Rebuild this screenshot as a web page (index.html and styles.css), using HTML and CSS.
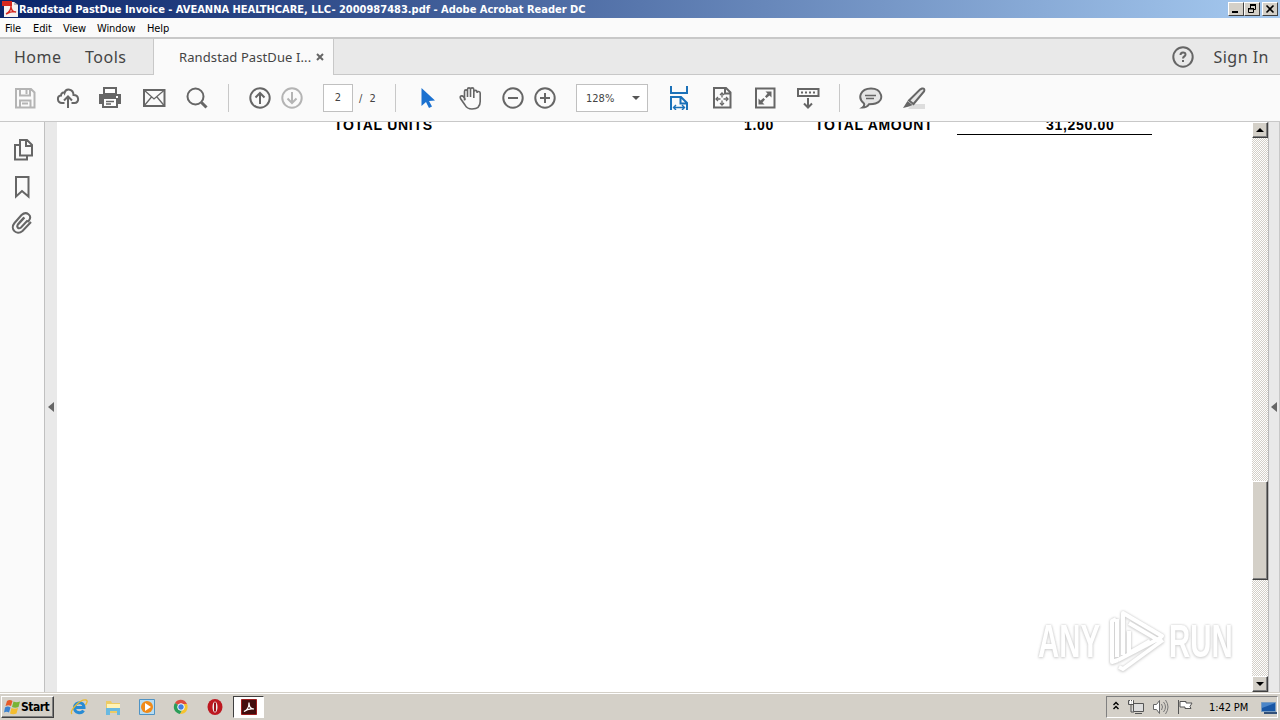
FILE: index.html
```html
<!DOCTYPE html>
<html lang="en">

<head>
  <meta charset="UTF-8">
  <title>Adobe Acrobat Reader DC</title>
  <link rel="stylesheet" href="styles.css">
</head>

<body>
  <div class="titlebar">
    <svg class="app-icon" width="16" height="16" viewBox="0 0 16 16">
      <path fill="#f4f1f0" d="M2 1h10l4 3v12H2z"/>
      <path fill="#bbb" d="M12 1v3h4z"/>
      <path fill="#d5281f" d="M0 0h10v5H0z"/>
      <path fill="none" stroke="#d5281f" stroke-width="1.4" d="M4 13c4-2 5-5 5-8 0 4 2 6 5 6-3-1-6 0-10 2z"/>
    </svg>
    <span class="title">Randstad PastDue Invoice - AVEANNA HEALTHCARE, LLC- 2000987483.pdf - Adobe Acrobat Reader DC</span>
    <div class="win-buttons">
      <button class="win-btn"><svg width="12" height="10"><path fill="#000" d="M2 7h6v2H2z"/></svg></button>
      <button class="win-btn"><svg width="12" height="10"><path fill="none" stroke="#000" d="M4.500 4V1.500h5v4H8M2.500 4.500h5v4h-5z"/><path fill="#000" d="M4 0h6v2H4zM2 4h6v1.500H2z"/></svg></button>
      <button class="win-btn close"><svg width="12" height="10"><path fill="none" stroke="#000" stroke-width="1.600" d="M2.500 1.500l7 7M9.500 1.500l-7 7"/></svg></button>
    </div>
  </div>

  <div class="menubar">
    <span class="m-file">File</span>
    <span class="m-edit">Edit</span>
    <span class="m-view">View</span>
    <span class="m-window">Window</span>
    <span>Help</span>
  </div>

  <div class="tabs">
    <div class="tabs-left">
      <span class="home">Home</span>
      <span class="tools">Tools</span>
    </div>
    <div class="tab">
      <span class="tab-name">Randstad PastDue I...</span>
      <svg width="8" height="8"><path stroke="#666" stroke-width="2" d="M1 1l6 6M7 1L1 7"/></svg>
    </div>
    <div class="tabs-right">
      <svg class="icon" viewBox="0 0 24 24"><circle cx="12" cy="12" r="9.700"/><path d="M9.500 10c0-3.500 5-3.300 5-.5 0 2-2.500 1.800-2.500 4M12 15v2"/></svg>
      <span class="signin">Sign In</span>
    </div>
  </div>

  <div class="toolbar">
    <svg class="icon light" viewBox="0 0 24 24"><path d="M3 3h15l3.500 3.500V21.500H3zM7 3v6.500h10V3M13.500 4v4M7 21v-6.500h10.500V21M9 17.500h6"/></svg>
    <svg class="icon" viewBox="0 0 24 24"><path d="M8.500 17H6c-5 0-5.500-7-1-7.500C5 6.500 8 6 8.500 7c1.500-5.500 9-4 9 2 6 0 6 8 1 8h-3M12 22V10.500M8 14.500l4-4 4 4"/></svg>
    <svg class="icon print" viewBox="0 0 24 24"><path fill="#666" stroke="none" d="M5 1h14v7H5zM1 8h22v10h-3v4H4v-4H1z"/><path fill="#fff" stroke="none" d="M7 3h10v4H7zM6 13h12v7H6zM18 10h2v2h-2z"/><path stroke-width="1.500" d="M8 15.500h8M8 18h5"/></svg>
    <svg class="icon" viewBox="0 0 24 24"><path d="M2 4h20.500v16H2z"/><path stroke-width="1.300" d="M2 4l10 9L22.500 4M2 20l7.500-9M22.500 20L15 11"/></svg>
    <svg class="icon" viewBox="0 0 24 24"><circle cx="10.500" cy="10.500" r="8"/><path stroke-width="3" d="M16.500 16.500l5 5"/></svg>
    <i class="sep"></i>
    <div class="pair">
      <svg class="icon" viewBox="0 0 24 24"><circle cx="12" cy="12" r="9.700"/><path d="M12 18V7M7.500 11.500L12 7l4.500 4.500"/></svg>
      <svg class="icon light" viewBox="0 0 24 24"><circle cx="12" cy="12" r="9.700"/><path d="M12 6v11M7.500 12.500L12 17l4.500-4.500"/></svg>
    </div>
    <div class="pages">
      <span class="page-box">2</span>
      <span class="page-total">/&nbsp; 2</span>
    </div>
    <i class="sep"></i>
    <svg class="icon" viewBox="0 0 24 24"><path fill="#1b71d0" stroke="none" d="M6.500 2v18l4.500-4 3 6 3-1.500-3-5.500 6-.5z"/></svg>
    <svg class="icon hand" viewBox="0 0 24 24"><path stroke-width="1.600" d="M6.500 14.500V5.500c0-2.200 3-2.200 3 0V11M9.500 11V3.500c0-2.200 3-2.200 3 0V11M12.500 11V3.500c0-2.200 3.300-2.200 3.300 0V12M15.800 12V6c0-2.200 3.200-2.200 3.200 0v0M19 7c0-2.200 3.200-1.800 3.200 0v8.500c0 4.500-2.700 7.500-8.200 7.500-3.500 0-5.500-1-7-4l-4.500-6.500c-1-2.500 1.500-3.500 3-1.700l2 3"/></svg>
    <div class="pair">
      <svg class="icon" viewBox="0 0 24 24"><circle cx="12" cy="12" r="9.700"/><path d="M7 12h10"/></svg>
      <svg class="icon" viewBox="0 0 24 24"><circle cx="12" cy="12" r="9.700"/><path d="M7 12h10M12 7v10"/></svg>
    </div>
    <div class="zoom"><span>128%</span><i class="caret"></i></div>
    <svg class="icon blue" viewBox="0 0 24 24"><path d="M4 0v7h16V0M4 24V11h10l6 6v7M13.500 11v6.500H20"/><path stroke-width="1.400" d="M7 21.500h10M9 19l-2.500 2.500L9 24M15 19l2.500 2.500L15 24"/></svg>
    <svg class="icon" viewBox="0 0 24 24"><path d="M4 2h12l4.500 4.500V21.500H4zM15 2v5.500h5"/><path stroke-width="1.300" stroke-dasharray="4.500 3" d="M6 13h12M12 7v12"/><path stroke-width="1.300" d="M8 11l-2 2 2 2M16 11l2 2-2 2M10 9l2-2 2 2M10 17l2 2 2-2"/></svg>
    <svg class="icon" viewBox="0 0 24 24"><path d="M3 2.500h18.500v19H3z"/><path fill="#666" stroke="none" d="M12.500 5.500h6v6l-2-2-3 2.500-1.500-1.500 2.500-3zM11.500 18.500h-6v-6l2 2 3-2.500 1.500 1.500-2.500 3z"/></svg>
    <svg class="icon" viewBox="0 0 24 24"><path d="M2 3h20.500v7H2zM12 12v9.500M8 17.500l4 4 4-4"/><path stroke-dasharray="2 2" d="M5 6.500h14"/></svg>
    <i class="sep"></i>
    <svg class="icon" viewBox="0 0 24 24"><path fill="#e5e5e5" d="M5 17.500C-2 12 1.500 2.500 12 2.500s14.500 11.500 4.500 15c-2 .7-4.500.7-6.500.7-1.500 2.300-4 3.300-6.500 3.300 1.500-1 2-2.500 1.500-4z"/><path stroke-width="1.300" d="M6 9.500h11M7 12.500h8"/></svg>
    <svg class="icon" viewBox="0 0 24 24"><path fill="#ddd" stroke="none" d="M10 18h13v5H6z"/><path fill="#e5e5e5" d="M20 2.500c2-.5 3 1 2 3L11.500 18 7 14.500 18 3.500z"/><path fill="#666" stroke="none" d="M5.500 15l5 4-3.500 1.500L1 22z"/></svg>
  </div>

  <div class="main">
    <div class="sidebar">
      <svg class="icon" viewBox="0 0 24 24"><path d="M9 2h7l5 5v10.500H9zM15 2v6h6M8 7H4v14.500h12V18"/></svg>
      <svg class="icon mark" viewBox="0 0 24 24"><path d="M5 2h12.500v19.500L11 16l-6 5.500z"/></svg>
      <svg class="icon clip" viewBox="0 0 24 24"><path d="M17.500 9.500l-6.500 7c-2.500 2-5-.5-3-3l6.500-7M8 16c-1-1-.5-3 1-4l5-5.500M21 11l-8.500 9c-6 5-13-2-8-8l7-8c5-4.500 11 .5 7.500 5.500l-1.500 1.500"/></svg>
    </div>
    <div class="collapse left"><i class="tri"></i></div>
    <div class="document">
      <div class="totals">
        <span>TOTAL UNITS</span>
        <span class="units">1.00</span>
        <span>TOTAL AMOUNT</span>
        <span class="amount">31,250.00</span>
      </div>
      <div class="watermark">
        <span>ANY</span>
        <svg width="60" height="64" viewBox="0 0 60 64"><path d="M18 46V4l39 23-4 4L24 14M24 22v22l21-12M11 10L7 12v41l6-2M13 51l42-22M14 58l4 2 40-29M12 10v38"/></svg>
        <span class="run">RUN</span>
      </div>
    </div>
    <div class="scrollbar">
      <div class="scroll-btn"><i class="up"></i></div>
      <div class="thumb"></div>
      <div class="scroll-btn"><i class="down"></i></div>
    </div>
    <div class="collapse right"><i class="tri"></i></div>
  </div>

  <div class="taskbar">
    <div class="start">
      <svg width="17" height="16" viewBox="0 0 17 16"><path fill="#e65a28" d="M3 2c2-1.500 4-1 5.500 0L7 7C5.500 6 3.500 6 1.500 7z"/><path fill="#78b436" d="M9.500 2.500c2 1 4 1 6.500 0L14.500 8c-2 1-4.500 1-6.500 0z"/><path fill="#3b82d0" d="M1 8.500c2-1.500 4-1 5.500 0L5 13.500c-1.500-1-3.500-1-5 0z"/><path fill="#f4bd2f" d="M7.500 9c2 1 4 1 6.500 0l-1.500 5.500c-2 1-4.500 1-6.500 0z"/></svg>
      <span>Start</span>
    </div>
    <div class="launch">
      <svg width="18" height="18" viewBox="0 0 18 18"><path fill="none" stroke="#278bd4" stroke-width="3" d="M4 9.500h10C14 3 5 3 4.500 9.500c0 6 7 6.500 9 3"/><path fill="none" stroke="#e9b92f" stroke-width="1.300" d="M2 16C-1 13 10 1 16 2c2 .5 1 3-.5 5"/></svg>
      <svg width="18" height="18" viewBox="0 0 18 18"><path fill="#eccb65" d="M2 3h5l1 2h8v10H2z"/><path fill="#fff3b5" d="M3 6h13v4H3z"/><path fill="#68b9e1" d="M2 10h14v7h-3v-4H6v4H2z"/></svg>
      <svg width="18" height="18" viewBox="0 0 18 18"><path fill="#b7dcf2" stroke="#4f93c4" d="M1.500 1.500h15v15h-15z"/><circle cx="9" cy="9" r="6" fill="#f08a18"/><path fill="#fff" d="M7 5l6 4-6 4z"/></svg>
      <svg width="18" height="18" viewBox="0 0 18 18"><path fill="#dd4b3e" d="M9 9L3 5c3-5 10-4 12 1H9z"/><path fill="#2a9d58" d="M9 9L3 5c-3 5 0 10 5 11l3-5z"/><path fill="#f6c32e" d="M9 6h6c2 5-1 10-7 10l3-5z"/><circle cx="9" cy="9" r="3.300" fill="#427ee0" stroke="#fff"/></svg>
      <svg width="18" height="18" viewBox="0 0 18 18"><ellipse cx="9" cy="9" rx="7.500" ry="8" fill="#bd1820"/><ellipse cx="9" cy="9" rx="2.500" ry="5.500" fill="#eee"/><path stroke="#9d1118" stroke-width="2" d="M9 4.500v9"/></svg>
    </div>
    <div class="active-task">
      <svg width="16" height="16" viewBox="0 0 16 16"><path fill="#430d0d" stroke="#9b1c1c" d="M.5.500h15v15H.5z"/><path fill="none" stroke="#fff" stroke-width="1.200" d="M3 12.500c3-1 5-5 5-9 0 4 2 6.500 5 6.500-3-.5-7 0-10 2.500z"/></svg>
    </div>
    <div class="tray">
      <svg width="8" height="12"><path fill="none" stroke="#000" stroke-width="1.400" d="M1.500 4L4 1.500 6.500 4M1.500 8L4 5.500 6.500 8"/></svg>
      <svg width="16" height="16"><path fill="#ddd" stroke="#555" d="M5.500 4.500h10v8h-10zM7 14.500h7M.5 1.500h5v4h-5zM3 6v7h3"/><path stroke="#fff" d="M2.500 1v4M4.500 1v4"/></svg>
      <svg width="17" height="16"><path fill="#fff" stroke="#666" d="M1.500 5.500h3l3-4v13l-3-4h-3z"/><path fill="none" stroke="#777" d="M9.500 5q2 3 0 6M11.500 3q4 5 0 10M13.500 1q5 7 0 14"/></svg>
      <svg width="17" height="16"><path fill="#fff" stroke="#555" d="M1.500 1v14M3 2.500h6v1.500h6l-2 3.500 1 2H8V8H3z"/></svg>
      <span class="clock">1:42 PM</span>
      <svg class="desktop" width="17" height="13"><path fill="#1957a5" stroke="#779bc0" d="M1.500 1.500h14v9h-14z"/><path fill="#4b86c9" d="M2 2h13L2 7z"/><path fill="#325078" d="M4 11h13v2H4z"/></svg>
    </div>
  </div>
</body>

</html>
```
FILE: styles.css
```css
* {
  box-sizing: border-box;
}

body {
  margin: 0;
  width: 1280px;
  height: 720px;
  overflow: hidden;
  display: flex;
  flex-direction: column;
  background: #fafafa;
  font-family: "DejaVu Sans Condensed", "DejaVu Sans", sans-serif;
  font-size: 11px;
  color: #000;
}

svg {
  flex: none;
  display: block;
}

span {
  white-space: nowrap;
}

.titlebar {
  height: 18px;
  flex: none;
  display: flex;
  align-items: center;
  padding-left: 2px;
  background: linear-gradient(to right, #0a246a, #a6caf0);
  color: #fff;
  font-weight: bold;
}

.title {
  margin-left: 1px;
  letter-spacing: 0;
}

.win-buttons {
  display: flex;
  margin-left: auto;
  padding-right: 2px;
}

.win-btn {
  width: 16px;
  height: 14px;
  padding: 0 0 0 1px;
  background: #d4d0c8;
  border: 1px solid;
  border-color: #fff #404040 #404040 #fff;
}

.win-btn.close {
  margin-left: 2px;
}

.menubar {
  height: 19px;
  flex: none;
  display: flex;
  align-items: center;
  padding: 1px 0 0 5px;
}

.menubar span {
  letter-spacing: -0.1px;
}

.m-file { width: 28px; }
.m-edit { width: 30px; }
.m-view { width: 34px; }
.m-window { width: 50px; }

.tabs {
  height: 38px;
  flex: none;
  display: flex;
  border-top: 2px solid #c8c8c8;
  font-family: "Noto Sans", sans-serif;
  color: #444;
}

.tabs-left,
.tabs-right {
  display: flex;
  align-items: center;
  background: #e9e9e9;
  border-bottom: 1px solid #c8c8c8;
}

.tabs-left {
  width: 154px;
  padding-left: 14px;
  border-right: 1px solid #c8c8c8;
  font-size: 16px;
  letter-spacing: 0.5px;
}

.home {
  width: 71px;
}

.tab {
  width: 179px;
  display: flex;
  align-items: center;
  padding-left: 25px;
}

.tab-name {
  width: 137px;
  font-size: 13px;
  letter-spacing: 0.1px;
}

.tabs-right {
  flex: 1;
  justify-content: flex-end;
  padding-right: 11px;
  border-left: 1px solid #c8c8c8;
}

.signin {
  margin-left: 18px;
  font-size: 16px;
  letter-spacing: 0.5px;
}

.icon {
  width: 24px;
  height: 24px;
  fill: none;
  stroke: #666;
  stroke-width: 2;
}

.icon.light {
  stroke: #b4b4b4;
}

.icon.blue {
  stroke: #1b71b8;
}

.toolbar {
  height: 47px;
  flex: none;
  display: flex;
  align-items: center;
  gap: 19px;
  padding-left: 13px;
  border-bottom: 1px solid #c8c8c8;
}

.print {
  margin: 0 1px 0 -1px;
}

.sep {
  width: 1px;
  height: 28px;
  background: #c8c8c8;
}

.pair {
  display: flex;
  gap: 8px;
}

.pages {
  width: 53px;
  display: flex;
  align-items: center;
}

.page-box {
  width: 30px;
  height: 28px;
  line-height: 26px;
  margin-right: 6px;
  text-align: center;
  background: #fff;
  border: 1px solid #c0c0c0;
  color: #444;
}

.page-total {
  color: #444;
  letter-spacing: 0.3px;
}

.zoom {
  width: 72px;
  height: 28px;
  display: flex;
  align-items: center;
  justify-content: space-between;
  padding: 0 7px 0 9px;
  background: #fff;
  border: 1px solid #c0c0c0;
  color: #444;
}

.caret {
  border: 4px solid transparent;
  border-top-color: #555;
  border-bottom: 0;
}

.main {
  height: 570px;
  flex: none;
  display: flex;
}

.sidebar {
  width: 45px;
  padding: 16px 0 0 11px;
  border-right: 1px solid #c0c0c0;
}

.mark {
  margin-top: 13px;
}

.clip {
  margin: 12px 0 0 -1px;
}

.collapse {
  display: flex;
  align-items: center;
  justify-content: center;
  background: #e9e9e9;
}

.collapse.left {
  width: 12px;
}

.collapse.right {
  width: 12px;
  border-left: 1px solid #b8b8b8;
  border-right: 1px solid #c8c8c8;
}

.tri {
  border: 5px solid transparent;
  border-right: 6px solid #666;
  border-left: 0;
}

.document {
  width: 1195px;
  display: flex;
  flex-direction: column;
  justify-content: space-between;
  overflow: hidden;
  background: #fff;
}

/* first row is scrolled partly out of view */
.totals {
  height: 17px;
  display: grid;
  grid-template-columns: 381px 100px 142px 195px;
  margin-top: -5px;
  padding-left: 277px;
  font-family: "Liberation Sans", Arial, sans-serif;
  font-size: 14px;
  font-weight: bold;
  line-height: 17px;
  letter-spacing: 0.7px;
}

.totals .units {
  width: 59px;
  text-align: right;
}

.totals .amount {
  padding-left: 89px;
  border-bottom: 1px solid #000;
}

.watermark {
  display: flex;
  align-items: center;
  height: 64px;
  margin: 0 0 19px 981px;
  color: #fff;
  font-family: "Liberation Sans", Arial, sans-serif;
  font-size: 46px;
  font-weight: bold;
  filter: drop-shadow(0 0 1px #ccc) drop-shadow(0 1px 1px #ddd);
}

.watermark span {
  width: 67px;
  transform: scaleX(0.64);
  transform-origin: left;
}

.watermark path {
  fill: none;
  stroke: #fff;
  stroke-width: 4;
  stroke-linejoin: round;
}

.watermark .run {
  margin-left: 4px;
}

.scrollbar {
  width: 16px;
  display: flex;
  flex-direction: column;
  background: repeating-conic-gradient(#d4d0c8 0 25%, #fff 0 50%) 0 0 / 2px 2px;
}

.scroll-btn,
.thumb {
  background: #d4d0c8;
  border: 1px solid;
  border-color: #fff #404040 #404040 #fff;
  box-shadow: inset -1px -1px #808080;
}

.scroll-btn {
  height: 16px;
  display: flex;
  align-items: center;
  justify-content: center;
}

.thumb {
  height: 99px;
  margin: 343px 0 96px;
}

.up,
.down {
  border: 4px solid transparent;
}

.up {
  border-top: 0;
  border-bottom-color: #000;
}

.down {
  border-bottom: 0;
  border-top-color: #000;
}

.taskbar {
  height: 28px;
  flex: none;
  display: flex;
  align-items: center;
  padding: 1px 2px 0 1px;
  background: #d4d0c8;
  border-top: 1px solid #d4d0c8;
  box-shadow: inset 0 1px #fff;
}

.start {
  width: 53px;
  height: 22px;
  display: flex;
  align-items: center;
  padding-left: 2px;
  border: 1px solid;
  border-color: #fff #404040 #404040 #fff;
  box-shadow: inset -1px -1px #808080;
  font-weight: bold;
  font-size: 12px;
}

.start span {
  letter-spacing: -0.5px;
}

.launch {
  display: flex;
  gap: 16px;
  margin-left: 16px;
}

.active-task {
  width: 31px;
  height: 22px;
  display: flex;
  align-items: center;
  justify-content: center;
  margin-left: 9px;
  background: #fff;
  border: 1px solid;
  border-color: #404040 #fff #fff #404040;
}

.tray {
  width: 172px;
  height: 22px;
  display: flex;
  align-items: center;
  margin-left: auto;
  padding-left: 5px;
  gap: 8px;
  border: 1px solid;
  border-color: #808080 #fff #fff #808080;
}

.clock {
  width: 40px;
  margin-left: 7px;
  letter-spacing: -0.1px;
}

.desktop {
  margin-left: 3px;
}
```
